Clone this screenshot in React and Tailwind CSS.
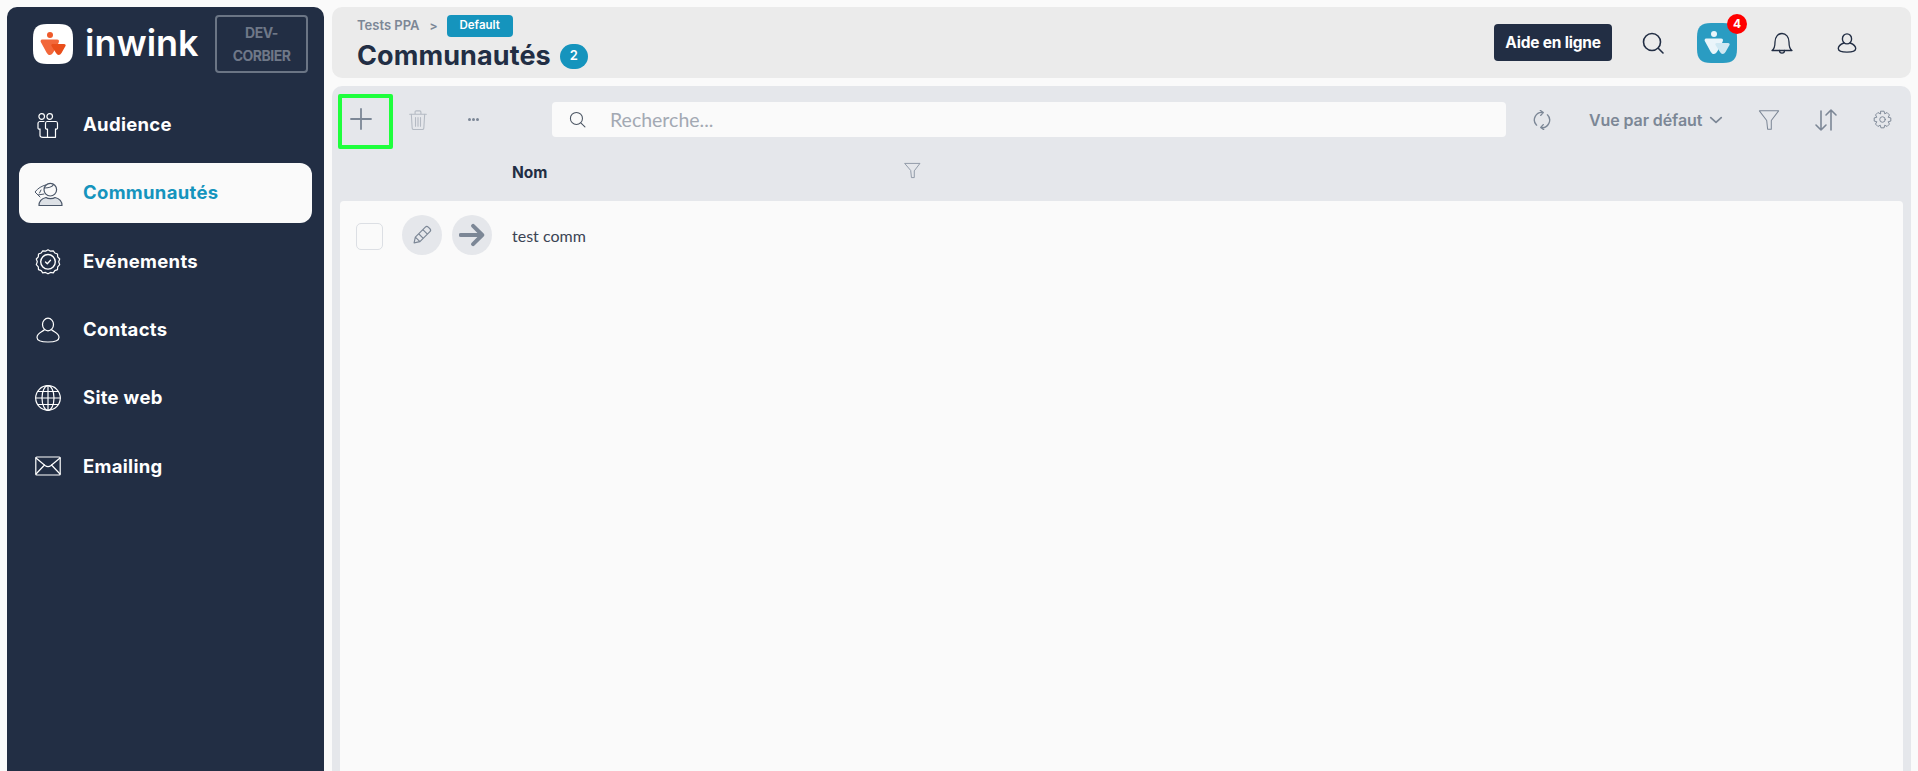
import React from "react";

const H = { fontFamily: "Inter, 'Liberation Sans', sans-serif" };
const L = { fontFamily: "Lato, 'Open Sans', sans-serif" };

const Logo = ({ bg, fg1, fg2, fg3 }) => (
  <svg viewBox="0 0 40 40" className="w-full h-full">
    <path d="M14 0H26C36 0 40 4 40 14V26C40 36 36 40 26 40H14C4 40 0 36 0 26V14C0 4 4 0 14 0Z" fill={bg} />
    <circle cx="17" cy="11" r="3" fill={fg1} />
    <path d="M9 15.500H24C26 15.500 26.500 17 25.500 19L20.500 28C18.500 32 15.500 32 13.500 28.500L7.800 18C7.300 17 7.800 15.500 9 15.500Z" fill={fg2} />
    <path d="M19.500 20H31C32.500 20 33 21 32.500 22L28.500 29C27 31.500 24.500 31.500 23 29L18.500 22C18 21 18.500 20 19.500 20Z" fill={fg3} />
  </svg>
);

const NavIcon = ({ name, color = "#fff" }) => {
  const p = { fill: "none", stroke: color, strokeWidth: 1.2, strokeLinecap: "round", strokeLinejoin: "round" };
  return (
    <svg viewBox="0 0 26 26" className="w-[26px] h-[26px] shrink-0 overflow-visible" {...p}>
      {name === "audience" && (
        <>
          <circle cx="6.700" cy="4.500" r="2.800" />
          <circle cx="14.700" cy="4.500" r="2.800" />
          <path d="M12 9.500H21C22 9.500 22.500 10.500 22.500 11.500V16C22.500 17 21.500 17.500 20.500 17V25.300H12.500V17C11.500 17.500 10.500 17 10.500 16V11.500C10.500 10.500 11 9.500 12 9.500Z" />
          <path d="M9 9.500H5C4 9.500 3 10.500 3 11.500V16C3 17 4 17.500 5 17V23.500C5 25 6.500 25.300 8 25.300H12.500" />
        </>
      )}
      {name === "comm" && (
        <>
          <path d="M10.500 5C7 6 3 8 0 12L3 15L9 14M3 15L5 17M6 10L4.500 13" strokeWidth="1" />
          <path d="M4 25.500C4 21 7 18.500 11 17.500C13 19 18 19 20 17.500C24 18.500 27 21 27 25.500Z" fill={color === "#fff" ? "none" : "#dde1e6"} />
          <circle cx="15.300" cy="9.700" r="6.300" fill="#fafafa" />
          <path d="M9.300 8C13 8 17 7 18.500 4.500" />
        </>
      )}
      {name === "event" && (
        <>
          <path d="M13 .8L15.500 2.200L18.300 1.800L19.800 4L22.500 5L22.700 7.800L24.700 10L23.700 12.800L24.700 15.600L22.700 17.800L22.500 20.600L19.800 21.600L18.300 23.800L15.500 23.400L13 24.800L10.500 23.400L7.700 23.800L6.200 21.600L3.500 20.600L3.300 17.800L1.300 15.600L2.300 12.800L1.300 10L3.300 7.800L3.500 5L6.200 4L7.700 1.800L10.500 2.200Z" />
          <circle cx="13" cy="12.800" r="7.300" strokeWidth="1.400" />
          <path d="M10.500 13L12.300 14.800L15.500 11.300" strokeWidth="1.300" />
        </>
      )}
      {name === "contact" && (
        <>
          <ellipse cx="13" cy="7.500" rx="5.500" ry="6.300" />
          <path d="M9.500 12.800C6 15.500 2 16 2 20.500C2 23 5 25 13 25C21 25 24 23 24 20.500C24 16 20 15.500 16.500 12.800" />
        </>
      )}
      {name === "web" && (
        <>
          <circle cx="13" cy="13" r="12.300" />
          <ellipse cx="13" cy="13" rx="6" ry="12.300" />
          <path d="M13 .7V25.300M.7 13H25.300M3 6.500H23M3 19.500H23" />
        </>
      )}
      {name === "mail" && (
        <>
          <rect x=".8" y="4" width="24.400" height="18" rx="1" />
          <path d="M1 5L10 12.500C12 14 14 14 16 12.500L25 5M1 21L9.500 12M25 21L16.500 12" />
        </>
      )}
    </svg>
  );
};

const NavItem = ({ icon, label, active }) => (
  <div className={`flex items-center h-[60px] pl-4 rounded-xl mb-[8.300px] ${active ? "bg-[#fafafa]" : ""}`}>
    <NavIcon name={icon} color={active ? "#4a5668" : "#fff"} />
    <span className={`ml-[22px] text-[18.500px] font-bold tracking-[0.3px] ${active ? "text-[#1594bd]" : "text-white"}`} style={H}>
      {label}
    </span>
  </div>
);

const Stroke = ({ children, size = 24, color = "#7c8796", sw = 1.5, box = 24 }) => (
  <svg viewBox={`0 0 ${box} ${box}`} width={size} height={size} fill="none" stroke={color} strokeWidth={sw} strokeLinecap="round" strokeLinejoin="round" className="shrink-0">
    {children}
  </svg>
);

const FilterIcon = ({ size, color, sw }) => (
  <Stroke size={size} color={color} sw={sw}>
    <path d="M1.500 2H22.500L14.500 12.500V22H10.500L9.500 12.500Z" />
  </Stroke>
);

export default function App() {
  return (
    <div className="flex w-full h-[771px] overflow-hidden bg-[#fafafa] pt-[7px] pl-[7px] pr-[7px] gap-2" style={H}>
      <aside className="w-[317px] shrink-0 bg-[#222e44] rounded-t-[10px] px-3">
        <div className="flex h-[66px] items-start pt-2">
          <div className="w-10 h-10 ml-[14px] mt-[9px] shrink-0">
            <Logo bg="#fff" fg1="#ee5a2a" fg2="#f2673a" fg3="#e94e1b" />
          </div>
          <span className="ml-[12px] mt-[4px] text-[36px] leading-[48px] font-semibold text-white" style={H}>inwink</span>
          <div className="ml-auto mr-[4px] w-[93px] h-[58px] border-2 border-[#6b7585] rounded-[4px] flex items-center justify-center text-center text-[14px] leading-[23px] font-bold text-[#6f7888] tracking-[-0.5px]">
            DEV-<br />CORBIER
          </div>
        </div>
        <nav className="mt-[22px]">
          <NavItem icon="audience" label="Audience" />
          <NavItem icon="comm" label="Communautés" active />
          <NavItem icon="event" label="Evénements" />
          <NavItem icon="contact" label="Contacts" />
          <NavItem icon="web" label="Site web" />
          <NavItem icon="mail" label="Emailing" />
        </nav>
      </aside>

      <main className="flex-1 min-w-0 flex flex-col gap-2">
        <header className="h-[71px] shrink-0 bg-[#ebebeb] rounded-[10px] flex items-center pl-[25px] pr-[53px]">
          <div className="flex flex-col -mt-[1px]">
            <div className="flex items-center h-[22px]">
              <span className="text-[13px] font-semibold text-[#7c8796]">Tests PPA</span>
              <span className="ml-[10px] text-[12px] font-bold text-[#7c8796]">&gt;</span>
              <span className="ml-[9px] w-[66px] h-[22px] rounded-[4px] bg-[#1594bd] text-white text-[11.500px] font-semibold flex items-center justify-center">Default</span>
            </div>
            <div className="flex items-center mt-[6px] h-[26px]">
              <span className="text-[27px] font-bold text-[#222e44] tracking-[0.1px]">Communautés</span>
              <span className="ml-[9px] w-7 h-[25px] rounded-full bg-[#1594bd] text-white text-[13px] font-semibold flex items-center justify-center">2</span>
            </div>
          </div>
          <div className="ml-auto flex items-center">
            <div className="w-[118px] h-[37px] rounded-[4px] bg-[#222e44] text-white text-[15.500px] font-bold flex items-center justify-center tracking-[-0.2px]">Aide en ligne</div>
            <div className="ml-[29px]">
              <Stroke size={24} color="#222e44" sw={1.6}>
                <circle cx="11" cy="11" r="8.500" />
                <path d="M17.500 17.500L22 22" />
              </Stroke>
            </div>
            <div className="relative ml-[32px] w-10 h-10">
              <Logo bg="#2a9cc2" fg1="#eaf5fa" fg2="#eaf5fa" fg3="#cfe8f2" />
              <span className="absolute -top-[9px] -right-[10px] w-5 h-5 rounded-full bg-[#ff0000] text-white text-[12px] font-bold flex items-center justify-center">4</span>
            </div>
            <div className="ml-[33px]">
              <Stroke size={24} color="#222e44" sw={1.3}>
                <path d="M2 19.500C4.500 18 5 15 5 11C5 6 8 2.500 12 2.500C16 2.500 19 6 19 11C19 15 19.500 18 22 19.500Z" />
                <path d="M9.500 19.500C9.500 23 14.500 23 14.500 19.500" />
              </Stroke>
            </div>
            <div className="ml-[42px]">
              <Stroke size={22} color="#222e44" sw={1.5}>
                <ellipse cx="12" cy="7.500" rx="5" ry="5.500" />
                <path d="M8.500 12C5 13.500 2.500 15 2.500 18C2.500 20.500 5 22 12 22C19 22 21.500 20.500 21.500 18C21.500 15 19 13.500 15.500 12" />
              </Stroke>
            </div>
          </div>
        </header>

        <section className="flex-1 min-h-0 bg-[#e5e7eb] rounded-t-[10px] flex flex-col px-2">
          <div className="flex items-center h-[51px] shrink-0 mt-2 -ml-[2px]">
            <div className="w-[55px] h-[55px] self-start shrink-0 border-4 border-[#1eff3c] rounded-[2px] flex items-start pt-[9px] pl-[7px]">
              <Stroke size={24} color="#7c8796" sw={1.8}>
                <path d="M12 2V22M2 12H22" />
              </Stroke>
            </div>
            <div className="ml-[15px]">
              <Stroke size={20} color="#b4bac3" sw={1.3}>
                <path d="M2 5H22M8.500 5V2.500C8.500 1.500 9 1 10 1H14C15 1 15.500 1.500 15.500 2.500V5M4 5L5 21.500C5 22.500 6 23.500 7 23.500H17C18 23.500 19 22.500 19 21.500L20 5M9 9V19.500M12 9V19.500M15 9V19.500" />
              </Stroke>
            </div>
            <div className="ml-[40px] flex gap-[1px]">
              <span className="w-[3px] h-[3px] rounded-full bg-[#7c8796]" />
              <span className="w-[3px] h-[3px] rounded-full bg-[#7c8796]" />
              <span className="w-[3px] h-[3px] rounded-full bg-[#7c8796]" />
            </div>
            <div className="ml-[73px] w-[954px] h-[35px] bg-[#fafafa] rounded-[4px] flex items-center pl-[17px]">
              <Stroke size={17} color="#4b5563" sw={1.5}>
                <circle cx="10.500" cy="10.500" r="8.500" />
                <path d="M17 17L22.500 22.500" />
              </Stroke>
              <span className="ml-[24px] text-[19.500px] text-[#a3a9b3]" style={L}>Recherche...</span>
            </div>
            <div className="ml-[26px]">
              <Stroke size={20} color="#7c8796" sw={1.6}>
                <path d="M13.500 3A9 9 0 0 0 5.500 18.200M10 .5L13.500 3L10.500 6.500M10.500 21A9 9 0 0 0 18.500 5.800M14 23.500L10.500 21L13.500 17.500" />
              </Stroke>
            </div>
            <span className="ml-[37px] w-[114px] shrink-0 whitespace-nowrap text-[16px] font-semibold text-[#7c8796] tracking-[-0.1px]">Vue par défaut</span>
            <div className="ml-[6px]">
              <Stroke size={14} color="#7c8796" sw={3}>
                <path d="M3 8L12 16L21 8" />
              </Stroke>
            </div>
            <div className="ml-[35px]">
              <FilterIcon size={22} color="#7c8796" sw={1.1} />
            </div>
            <div className="ml-[34px]">
              <Stroke size={24} color="#7c8796" sw={1.6}>
                <path d="M7 3V22M2 17L7 22L12 17M17 22V2M12 7L17 2L22 7" />
              </Stroke>
            </div>
            <div className="ml-[35px]">
              <Stroke size={19} color="#7c8796" sw={1.2}>
                <circle cx="12" cy="12" r="3.500" />
                <path d="M10 1.500H14L14.800 4.800L17.800 3.200L20.800 6.200L19.200 9.200L22.500 10V14L19.200 14.800L20.800 17.800L17.800 20.800L14.800 19.200L14 22.500H10L9.200 19.200L6.200 20.800L3.200 17.800L4.800 14.800L1.500 14V10L4.800 9.200L3.200 6.200L6.200 3.200L9.200 4.800Z" />
              </Stroke>
            </div>
          </div>

          <div className="flex items-center h-[56px] shrink-0">
            <span className="ml-[172px] text-[15.500px] font-bold text-[#222e44]">Nom</span>
            <div className="ml-[357px] -mt-[5px]">
              <FilterIcon size={17} color="#8a94a2" sw={1.3} />
            </div>
          </div>

          <div className="flex-1 bg-[#fafafa] rounded-t-[4px]">
            <div className="flex items-center pt-[14px] pl-4">
              <div className="w-[27px] h-[27px] mt-[2px] rounded-[5px] border border-[#dcdfe4] bg-[#fafafa]" />
              <div className="ml-[19px] w-10 h-10 rounded-full bg-[#e5e7eb] flex items-center justify-center">
                <Stroke size={20} color="#7c8796" sw={1.4}>
                  <path d="M2.500 21.500L4 14.500L16 2.500C17 1.500 18.500 1.500 19.500 2.500L21.500 4.500C22.500 5.500 22.500 7 21.500 8L9.500 20ZM4 14.500L9.500 20M8 10.500L13.500 16M13 5.500L18.500 11" />
                </Stroke>
              </div>
              <div className="ml-[10px] w-10 h-10 rounded-full bg-[#e5e7eb] flex items-center justify-center">
                <Stroke size={26} color="#7c8796" sw={3.600}>
                  <path d="M1.500 12H21M13 3.500L21.500 12L13 20.500" />
                </Stroke>
              </div>
              <span className="ml-[20px] mt-[2px] text-[16px] text-[#3a4454]" style={L}>test comm</span>
            </div>
          </div>
        </section>
      </main>
    </div>
  );
}
